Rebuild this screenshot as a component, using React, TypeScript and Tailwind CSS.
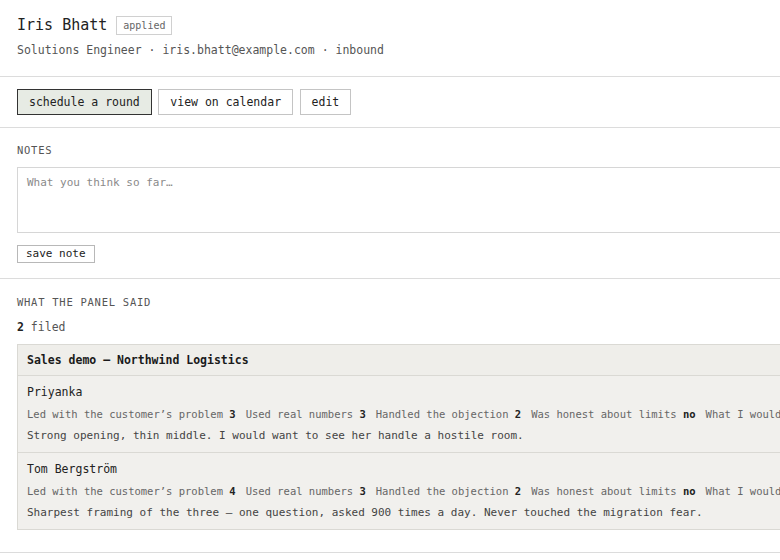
import React from "react";

type Score = { label: string; value: string };
type Review = { name: string; scores: Score[]; comment: string };

const reviews: Review[] = [
  {
    name: "Priyanka",
    scores: [
      { label: "Led with the customer’s problem", value: "3" },
      { label: "Used real numbers", value: "3" },
      { label: "Handled the objection", value: "2" },
      { label: "Was honest about limits", value: "no" },
      { label: "What I would probe next", value: "pricing" },
    ],
    comment:
      "Strong opening, thin middle. I would want to see her handle a hostile room.",
  },
  {
    name: "Tom Bergström",
    scores: [
      { label: "Led with the customer’s problem", value: "4" },
      { label: "Used real numbers", value: "3" },
      { label: "Handled the objection", value: "2" },
      { label: "Was honest about limits", value: "no" },
      { label: "What I would probe next", value: "migration" },
    ],
    comment:
      "Sharpest framing of the three — one question, asked 900 times a day. Never touched the migration fear.",
  },
];

export default function App() {
  return (
    <div className="w-[780px] h-[560px] overflow-hidden bg-white text-[#222] font-['DejaVu_Sans_Mono',monospace]">
      <div className="w-[1100px]">
        {/* candidate header */}
        <div className="px-[17px] pt-[15px] pb-[18px] border-b border-[#dcdcdc]">
          <div className="flex items-center gap-[9px]">
            <h1 className="text-[15px] leading-[20px] font-normal">Iris Bhatt</h1>
            <span className="border border-[#d0d0d0] px-[6px] py-[2px] text-[10px] leading-[13px] text-[#666]">
              applied
            </span>
          </div>
          <div className="mt-[7px] text-[11.5px] leading-[16px] text-[#555]">
            Solutions Engineer · iris.bhatt@example.com · inbound
          </div>
        </div>

        {/* actions */}
        <div className="px-[17px] pt-[12px] pb-[12px] border-b border-[#dcdcdc] flex gap-[6.5px]">
          <button className="border border-[#333] bg-[#e7ebe4] px-[11px] py-[5px] text-[11.5px] leading-[14px] text-[#222]">
            schedule a round
          </button>
          <button className="border border-[#c4c4c4] bg-white px-[11px] py-[5px] text-[11.5px] leading-[14px] text-[#222]">
            view on calendar
          </button>
          <button className="border border-[#c4c4c4] bg-white px-[11px] py-[5px] text-[11.5px] leading-[14px] text-[#222]">
            edit
          </button>
        </div>

        {/* notes */}
        <div className="px-[17px] pt-[15px] pb-[14px] border-b border-[#dcdcdc]">
          <div className="text-[10.5px] leading-[14px] tracking-[0.07em] text-[#555]">NOTES</div>
          <textarea
            className="mt-[10px] block w-full h-[66px] resize-none border border-[#d6d6d6] px-[9px] pt-[7px] text-[11px] leading-[16px] text-[#222] placeholder:text-[#8a8a8a] outline-none"
            placeholder="What you think so far…"
          />
          <button className="mt-[12px] border border-[#b8b8b8] bg-white px-[8px] py-[1px] text-[11px] leading-[14px] text-[#222]">
            save note
          </button>
        </div>

        {/* panel feedback */}
        <div className="px-[17px] pt-[16px] pb-[22px] border-b border-[#dcdcdc]">
          <div className="text-[10.5px] leading-[14px] tracking-[0.07em] text-[#555]">
            WHAT THE PANEL SAID
          </div>
          <div className="mt-[10px] text-[11.5px] leading-[16px] text-[#555]">
            <b className="text-[#222]">2</b> filed
          </div>
          <div className="mt-[9px] border border-[#dad9d4] bg-[#f1f0ed]">
            <div className="px-[9px] pt-[8px] pb-[7px] text-[11.5px] leading-[15px] font-bold text-[#1a1a1a] bg-[#efeeea] border-b border-[#dad9d4]">
              Sales demo — Northwind Logistics
            </div>
            {reviews.map((r, i) => (
              <div
                key={r.name}
                className={`px-[9px] py-[8px] ${i > 0 ? "border-t border-[#dad9d4]" : ""}`}
              >
                <div className="text-[11.5px] leading-[16px] text-[#222]">{r.name}</div>
                <div className="mt-[6px] text-[10.5px] leading-[16px] text-[#666] whitespace-nowrap">
                  {r.scores.map((s) => (
                    <span key={s.label} className="mr-[10px]">
                      {s.label} <b className="text-[#222]">{s.value}</b>
                    </span>
                  ))}
                </div>
                <div className="mt-[6px] text-[11px] leading-[16px] text-[#444] whitespace-nowrap">
                  {r.comment}
                </div>
              </div>
            ))}
          </div>
        </div>
      </div>
    </div>
  );
}
